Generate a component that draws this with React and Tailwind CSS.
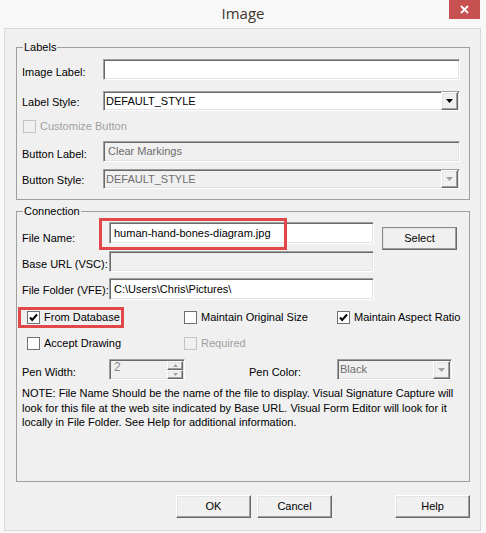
import React from 'react'

const sunken =
  'border border-[#a0a0a0] border-b-white border-r-white shadow-[inset_1px_1px_0_#696969,inset_-1px_-1px_0_#e3e3e3]'
const raised =
  'border border-white border-b-[#696969] border-r-[#696969] shadow-[inset_-1px_-1px_0_#a0a0a0,inset_1px_1px_0_#e3e3e3]'

function TextBox({ value = '', disabled, className = '' }) {
  return (
    <div
      className={`${sunken} ${disabled ? 'bg-[#f0f0f0] text-[#6d6d6d]' : 'bg-white text-black'} flex items-center pl-[4px] ${className}`}
    >
      {value}
    </div>
  )
}

function Arrow({ disabled }) {
  return (
    <svg width="7" height="4" viewBox="0 0 7 4">
      <path d="M0 0h7L3.5 4z" fill={disabled ? '#a0a0a0' : '#000'} />
    </svg>
  )
}

function ComboBox({ value, disabled, className = '' }) {
  return (
    <div
      className={`${sunken} ${disabled ? 'bg-[#f0f0f0] text-[#6d6d6d]' : 'bg-white text-black'} flex items-center pl-[2px] ${className}`}
    >
      <span className="flex-1">{value}</span>
      <div className={`${raised} bg-[#f0f0f0] w-[17px] h-[18px] mr-[1px] flex items-center justify-center`}>
        <Arrow disabled={disabled} />
      </div>
    </div>
  )
}

function Spinner({ value }) {
  return (
    <div className={`${sunken} bg-[#f0f0f0] text-[#8a8a8a] flex items-start w-[76px] h-[21px] pl-[4px]`}>
      <span className="flex-1 leading-[14px] text-[12px]">{value}</span>
      <div className="flex flex-col mr-[1px] mt-[1px]">
        <div className={`${raised} bg-[#f0f0f0] w-[16px] h-[9px] flex items-center justify-center`}>
          <svg width="5" height="3" viewBox="0 0 5 3"><path d="M0 3h5L2.5 0z" fill="#a0a0a0" /></svg>
        </div>
        <div className={`${raised} bg-[#f0f0f0] w-[16px] h-[9px] flex items-center justify-center`}>
          <svg width="5" height="3" viewBox="0 0 5 3"><path d="M0 0h5L2.5 3z" fill="#a0a0a0" /></svg>
        </div>
      </div>
    </div>
  )
}

function CheckBox({ label, checked, disabled }) {
  return (
    <div className="flex items-center h-[13px]">
      <div
        className={`w-[13px] h-[13px] border flex items-center justify-center ${
          disabled ? 'border-[#c4c4c4] bg-[#f0f0f0]' : 'border-[#707070] bg-white'
        }`}
      >
        {checked && (
          <svg width="9" height="9" viewBox="0 0 9 9">
            <path d="M1 4.5l2.2 2.4L8 1.5" stroke="#000" strokeWidth="2" fill="none" />
          </svg>
        )}
      </div>
      <span className={`ml-[4px] ${disabled ? 'text-[#a0a0a0]' : 'text-black'}`}>{label}</span>
    </div>
  )
}

function PushButton({ children, className = '' }) {
  return (
    <button className={`${raised} bg-[#f0f0f0] h-[23px] w-[75px] flex items-center justify-center ${className}`}>
      {children}
    </button>
  )
}

function GroupBox({ title, className = '', children }) {
  return (
    <div className={`relative border border-[#a0a0a0] flex flex-col ${className}`}>
      <span className="absolute -top-[7px] left-[6px] px-[1px] bg-[#f0f0f0] leading-[13px]">{title}</span>
      {children}
    </div>
  )
}

export default function App() {
  return (
    <div className="relative w-[486px] h-[533px] bg-[#f8f8f8] font-['Liberation_Sans',Arial,sans-serif] text-[11px] leading-[13px] text-black overflow-hidden">
      <div className="h-[28px] flex items-center justify-center">
        <span className="font-['Open_Sans',sans-serif] text-[15px] text-[#40362e] -mt-[2px]">Image</span>
      </div>
      <div className="absolute top-0 left-[449px] w-[31px] h-[19px] bg-[#c75050] flex items-center justify-center">
        <svg width="9" height="9" viewBox="0 0 9 9">
          <path d="M1 1l7 7M8 1L1 8" stroke="#fff" strokeWidth="1.8" />
        </svg>
      </div>

      <div className="ml-[4px] w-[477px] h-[503px] border border-[#d9d9d9] bg-[#f0f0f0] pl-[11px] pr-[10px] pt-[18px]">
        <GroupBox title="Labels" className="h-[153px]">
          <div className="flex items-center mt-[11px] h-[21px]">
            <span className="w-[86px] pl-[5px] pt-[5px]">Image Label:</span>
            <TextBox className="w-[357px] h-[21px]" />
          </div>
          <div className="flex items-center mt-[11px] h-[20px]">
            <span className="w-[86px] pl-[5px] pt-[3px]">Label Style:</span>
            <ComboBox value="DEFAULT_STYLE" className="w-[357px] h-[20px]" />
          </div>
          <div className="mt-[9px] pl-[6px]">
            <CheckBox label="Customize Button" disabled />
          </div>
          <div className="flex items-center mt-[8px] h-[21px]">
            <span className="w-[86px] pl-[5px] pt-[5px]">Button Label:</span>
            <TextBox value="Clear Markings" disabled className="w-[357px] h-[21px]" />
          </div>
          <div className="flex items-center mt-[7px] h-[20px]">
            <span className="w-[86px] pl-[5px] pt-[3px]">Button Style:</span>
            <ComboBox value="DEFAULT_STYLE" disabled className="w-[357px] h-[20px]" />
          </div>
        </GroupBox>

        <GroupBox title="Connection" className="h-[271px] mt-[11px]">
          <div className="flex items-start mt-[10px] h-[22px]">
            <span className="w-[92px] pl-[5px] mt-[10px]">File Name:</span>
            <div className="relative">
              <TextBox value="human-hand-bones-diagram.jpg" className="w-[265px] h-[22px]" />
              <div className="absolute -left-[10px] -top-[4px] w-[188px] h-[32px] border-[3px] border-[#e2474a]" />
            </div>
            <PushButton className="ml-[8px] mt-[5px] w-[74px] h-[21px] border-[#696969] border-t-[#8a8a8a] border-l-[#8a8a8a]">
              Select
            </PushButton>
          </div>
          <div className="flex items-center mt-[7px] h-[21px]">
            <span className="w-[92px] pl-[5px] pt-[5px]">Base URL (VSC):</span>
            <TextBox disabled className="w-[265px] h-[21px]" />
          </div>
          <div className="flex items-center mt-[6px] h-[22px]">
            <span className="w-[92px] pl-[5px] pt-[3px]">File Folder (VFE):</span>
            <TextBox value="C:\Users\Chris\Pictures\" className="w-[265px] h-[22px]" />
          </div>
          <div className="relative flex items-center mt-[11px] pl-[10px]">
            <div className="w-[157px]">
              <CheckBox label="From Database" checked />
            </div>
            <div className="w-[153px]">
              <CheckBox label="Maintain Original Size" />
            </div>
            <CheckBox label="Maintain Aspect Ratio" checked />
            <div className="absolute left-[1px] -top-[4px] w-[106px] h-[21px] border-[3px] border-[#e2474a]" />
          </div>
          <div className="flex items-center mt-[13px] pl-[10px]">
            <div className="w-[157px]">
              <CheckBox label="Accept Drawing" />
            </div>
            <CheckBox label="Required" disabled />
          </div>
          <div className="flex items-center mt-[9px] h-[21px]">
            <span className="w-[92px] pl-[5px] pt-[5px]">Pen Width:</span>
            <Spinner value="2" />
            <span className="ml-[64px] w-[88px] pt-[5px]">Pen Color:</span>
            <ComboBox value="Black" disabled className="w-[115px] h-[21px]" />
          </div>
          <p className="mt-[6px] pl-[5px] pr-[10px] leading-[14.5px]">
            NOTE: File Name Should be the name of the file to display. Visual Signature Capture will look for this
            file at the web site indicated by Base URL. Visual Form Editor will look for it locally in File Folder. See
            Help for additional information.
          </p>
        </GroupBox>

        <div className="flex justify-end mt-[13px]">
          <PushButton>OK</PushButton>
          <PushButton className="ml-[6px]">Cancel</PushButton>
          <PushButton className="ml-[63px]">Help</PushButton>
        </div>
      </div>
    </div>
  )
}
